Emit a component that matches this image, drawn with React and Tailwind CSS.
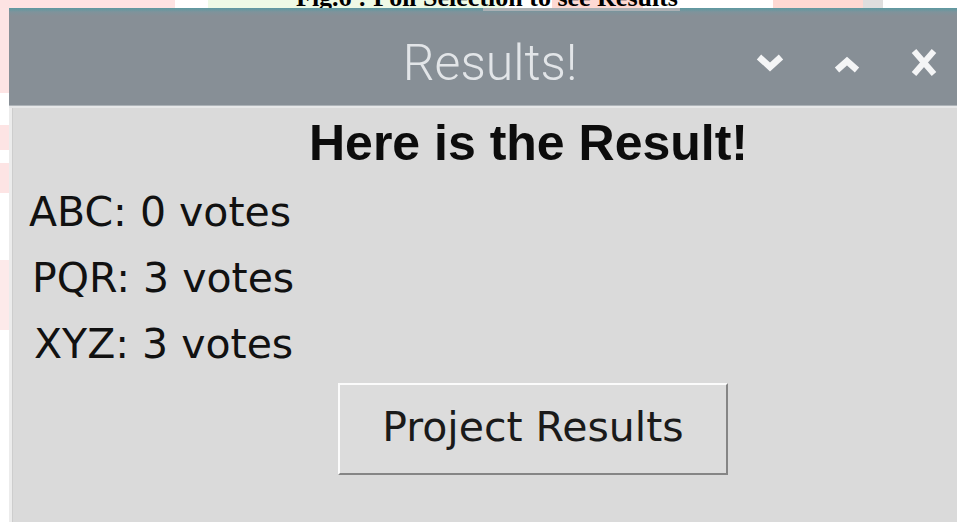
import React from 'react';

const results = [
    { name: 'ABC', votes: 0, pad: 'pl-[16px]' },
    { name: 'PQR', votes: 3, pad: 'pl-[19px]' },
    { name: 'XYZ', votes: 3, pad: 'pl-[21px]' },
];

function ChevronDown() {
    return (
        <svg width="28" height="28" viewBox="0 0 28 28" fill="none">
            <path d="M3 8 L14 18 L25 8" stroke="#f4f5f6" strokeWidth="6.5" strokeLinejoin="miter" />
        </svg>
    );
}

function ChevronUp() {
    return (
        <svg width="28" height="28" viewBox="0 0 28 28" fill="none">
            <path d="M4 21 L14 12 L24 21" stroke="#f4f5f6" strokeWidth="6.5" strokeLinejoin="miter" />
        </svg>
    );
}

function CloseIcon() {
    return (
        <svg width="28" height="28" viewBox="0 0 28 28" fill="none">
            <path d="M4 2 L24 25 M24 2 L4 25" stroke="#f4f5f6" strokeWidth="6" />
        </svg>
    );
}

export default function App() {
    return (
        <div className="w-[957px] h-[522px] overflow-hidden bg-white flex flex-col font-['DejaVu_Sans',sans-serif]">
            {/* page strip above the window */}
            <div className="relative h-[8px] shrink-0 flex">
                <div className="w-[175px] bg-[#fde3e3]" />
                <div className="w-[33px]" />
                <div className="w-[297px] bg-[#eefae6]" />
                <div className="w-[47px]" />
                <div className="w-[91px] bg-[#fdd9d3]" />
                <div className="w-[130px]" />
                <div className="w-[90px] bg-[#fdd9d3]" />
                <div className="w-[20px] bg-[#dedede]" />
                <div className="flex-1" />
                <div className="absolute left-[296px] top-[-15px] text-[26px] leading-none font-bold text-black whitespace-nowrap font-['Liberation_Serif',serif]">
                    Fig.6 : Poll Selection to see Results
                </div>
            </div>

            <div className="flex flex-1 min-h-0">
                {/* left page margin */}
                <div className="w-[9px] shrink-0 flex flex-col">
                    <div className="h-[85px] bg-[#fde4e4]" />
                    <div className="h-[32px]" />
                    <div className="h-[25px] bg-[#fde4e4]" />
                    <div className="h-[13px]" />
                    <div className="h-[30px] bg-[#fde4e4]" />
                    <div className="h-[67px]" />
                    <div className="h-[70px] bg-[#fdeaea]" />
                </div>

                {/* window */}
                <div className="flex-1 flex flex-col">
                    <div className="relative h-[97px] shrink-0 grid grid-cols-[1fr_auto_1fr] pl-[33px] pr-[19px] pt-[30px] bg-[linear-gradient(to_bottom,#5c99a1_0px,#7f939b_4px,#878f96_8px,#878f96_100%)]">
                        <div className="absolute left-[474px] top-0 w-[197px] h-[3px] bg-[#aab0b4]" />
                        <div />
                        <div className="h-[50px] leading-[50px] text-[50px] font-light text-[#e2e5e8] font-['Roboto',sans-serif]">
                            Results!
                        </div>
                        <div className="flex justify-end gap-[49px] mt-[11px] h-[28px]">
                            <ChevronDown />
                            <ChevronUp />
                            <CloseIcon />
                        </div>
                    </div>
                    <div className="h-[1px] bg-[#adb3b8] shrink-0" />
                    <div className="h-[2px] bg-[#e6e7e8] shrink-0" />

                    <div className="flex-1 flex bg-[#dadada]">
                        <div className="w-[3px] bg-[#ececec]" />
                        <div className="w-[1px] bg-[#cdcdcd]" />
                        <div className="flex-1 flex flex-col text-[#111]">
                            <div className="h-[71px] leading-[71px] pl-[296px] text-[50px] font-bold text-[#0c0c0c] font-['Liberation_Sans',sans-serif] whitespace-nowrap">
                                Here is the Result!
                            </div>
                            {results.map((r) => (
                                <div
                                    key={r.name}
                                    className={`h-[66px] leading-[66px] text-[41px] whitespace-nowrap ${r.pad}`}
                                >
                                    {r.name}: {r.votes} votes
                                </div>
                            ))}
                            <div className="mt-[6px] ml-[325px] w-[390px] h-[92px] flex items-center justify-center pb-[4px] bg-[#dcdcdc] border-2 border-t-[#fbfbfb] border-l-[#fbfbfb] border-b-[#858585] border-r-[#858585] text-[41px] leading-none text-[#1a1a1a] whitespace-nowrap">
                                Project Results
                            </div>
                        </div>
                    </div>
                </div>
            </div>
        </div>
    );
}
